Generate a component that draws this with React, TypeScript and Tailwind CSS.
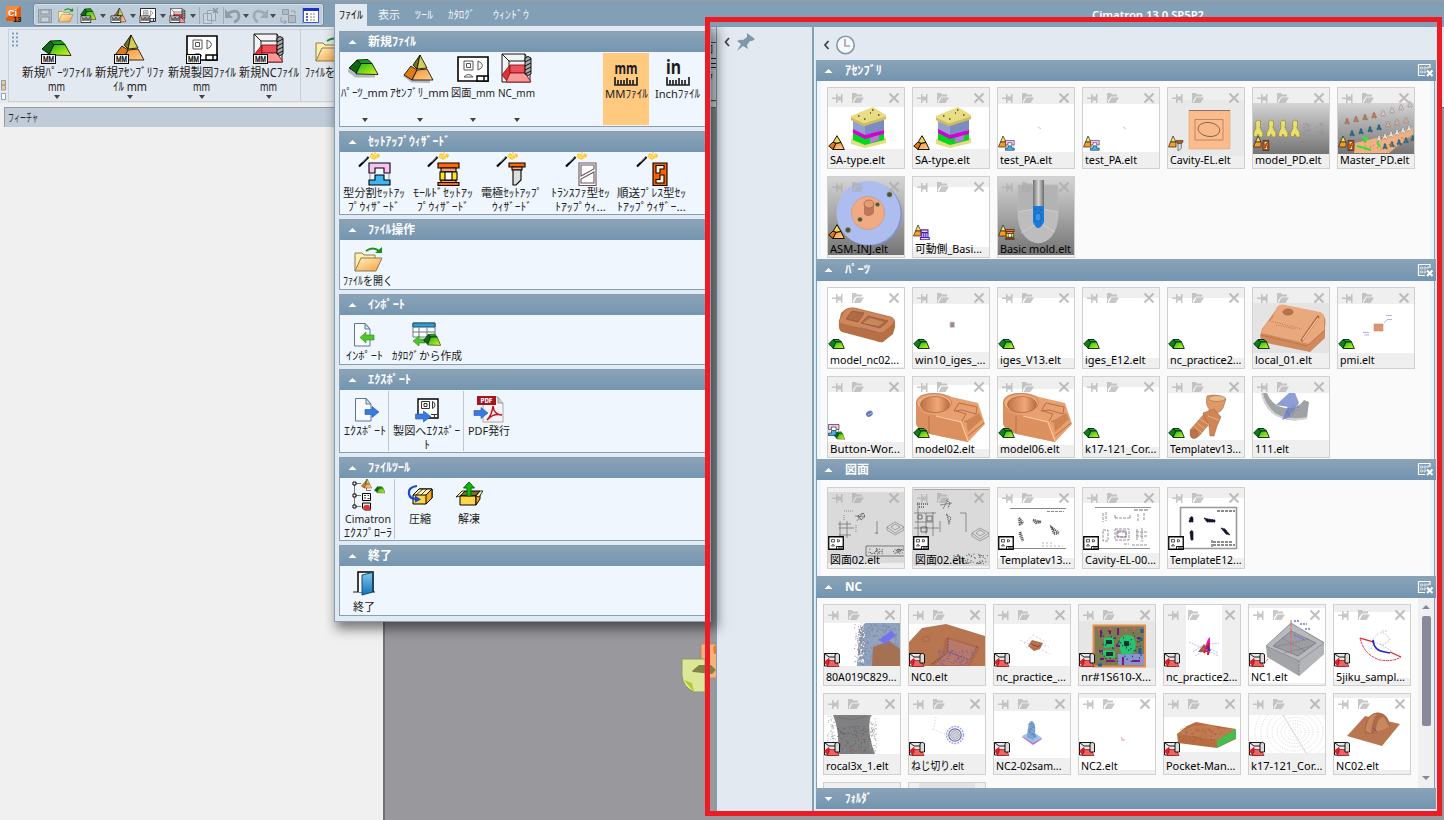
import React, { useLayoutEffect, useRef } from "react";

const FONT = "font-['Noto_Sans','Noto_Sans_CJK_JP',sans-serif]";

/* Text condensed or widened so that it spans exactly `w` pixels. */
function Fit({ t, w, className = "" }: { t: string; w: number; className?: string }) {
  const ref = useRef<HTMLSpanElement>(null);
  useLayoutEffect(() => {
    const el = ref.current;
    if (!el) return;
    el.style.transform = "none";
    const natural = el.getBoundingClientRect().width;
    el.style.transform = `scaleX(${w / natural})`;
  }, [t, w]);
  return (
    <span className="block" style={{ width: w }}>
      <span ref={ref} className={`inline-block origin-left whitespace-pre align-top ${className}`}>
        {t}
      </span>
    </span>
  );
}

function dots(n: number, x: number, y: number, w: number, h: number, seed: number) {
  let s = seed;
  const r = () => {
    s = (s * 1103515245 + 12345) % 2147483648;
    return s / 2147483648;
  };
  let d = "";
  for (let i = 0; i < n; i++) d += `M${(x + r() * w).toFixed(1)} ${(y + r() * h).toFixed(1)}h1`;
  return d;
}

/* ---------- glyph drawings ---------- */

const Green = ({ shadow = false }: { shadow?: boolean }) => (
  <g stroke="#000" strokeWidth=".8" strokeLinejoin="round">
    {shadow && <path d="M0 12L8 18L27 18" stroke="#b5b8bb" strokeWidth="3" fill="none" />}
    <path d="M1 10L9 2L13 5.500L8 15Z" fill="#0c6b0c" />
    <path d="M9 2L20 1.500L24 5.500L13 5.500Z" fill="#12a512" />
    <path d="M13 5.500L24 5.500L30 16.500L8 16Z" fill="url(#lime)" />
  </g>
);

const Pyramid = ({ shadow = false }: { shadow?: boolean }) => (
  <g stroke="#000" strokeWidth=".8" strokeLinejoin="round">
    {shadow && <path d="M1 20L9 26L27 26.500" stroke="#b5b8bb" strokeWidth="3" fill="none" />}
    <path d="M17 0L10 10L14 14Z" fill="#77771a" />
    <path d="M17 0L14 14L24 13Z" fill="#d4cd52" />
    <path d="M1 20L8 11L14 15L9 25Z" fill="#e07a14" />
    <path d="M14 15L24 14L30 25L9 25Z" fill="url(#orange)" />
  </g>
);

const Draft = () => (
  <g fill="#fff" stroke="#000">
    <path d="M1 1H31V25H1Z" strokeWidth="1.600" />
    <path d="M7 5H16V14H7ZM9.500 7.500H13.500V11.500H9.500ZM21 5V14Q25.500 12 25.500 9.500Q25.500 7 21 5M7 21Q11.500 16 16 21Z" strokeWidth="1" stroke="#555" />
    <path d="M20 20H31V25H20ZM27 20V25" strokeWidth="1.400" />
  </g>
);

const Milling = () => (
  <g stroke="#000" strokeWidth=".9" strokeLinejoin="round">
    <path d="M1 1H24L29 12V29H1Z" fill="#f1f3f5" />
    <path d="M1 1L8 8H24M8 8V14M24 1V8" fill="none" />
    <path d="M1 22L9 12V24L6 28Z" fill="#e2303b" stroke="#8f1018" />
    <path d="M9 12H24V20H9Z" fill="#ea5059" stroke="#8f1018" />
    <path d="M9 20H24L30 29H5Z" fill="#f79a98" stroke="#8f1018" />
    <path d="M24 5Q27 2 30 5V21Q27 24 24 21Z" fill="#a9a9a9" />
    <path d="M24 9L30 6M24 13L30 10M24 17L30 14M24 21L30 18" />
  </g>
);

const Folder = () => (
  <g strokeLinejoin="round">
    <path d="M1 24V6H8L10 8H21V13" fill="#fdf0a8" stroke="#8a7a50" />
    <path d="M1 24L7 11H28L22 24Z" fill="url(#folder)" stroke="#8a7a50" />
    <path d="M12 4Q19 -1 25 4" fill="none" stroke="#169016" strokeWidth="2" />
    <path d="M21 6H28V0Z" fill="#169016" />
  </g>
);

const MM = ({ x, y }: { x: number; y: number }) => (
  <g>
    <rect x={x} y={y} width="14" height="9" fill="#fff" stroke="#000" />
    <text x={x + 7} y={y + 7.600} fontSize="8.500" textAnchor="middle" fontFamily="Liberation Sans" stroke="#000" strokeWidth=".3" textLength="11" lengthAdjust="spacingAndGlyphs">
      MM
    </text>
  </g>
);

const Mold = ({ kind }: { kind: string }) => {
  switch (kind) {
    case "split":
      return (
        <g stroke="#000" strokeWidth="1.100">
          <path d="M1 1H22V11H16V6H7V11H1Z" fill="#fbc0f4" />
          <path d="M1 23V18H7V13H16V18H22V23Z" fill="#3fb5f2" />
          <path d="M2 12V17M21 12V17" stroke="#999" />
        </g>
      );
    case "mold":
      return (
        <g stroke="#000" strokeWidth="1.100">
          <path d="M1 1H22V6H1ZM1 20.500H22V23.500H1Z" fill="#ff6a00" />
          <path d="M4 6H19V10H4ZM4 18H19V20.500H4Z" fill="#f5a080" />
          <path d="M3 10H20V18H3Z" fill="#ffe51a" />
          <path d="M8 10H15V18H8Z" fill="#fff" />
        </g>
      );
    case "electrode":
      return (
        <g stroke="#000" strokeWidth="1.100">
          <path d="M3 1H19V5H3Z" fill="#ff6a00" />
          <path d="M6 5H16V8H6Z" fill="#f5b080" />
          <path d="M7 8H15V18L10 23H7Z" fill="#ddd" />
        </g>
      );
    case "transfer":
      return (
        <g stroke="#6a5560" strokeWidth="1.100" fill="#fff">
          <path d="M4 1H21V23.500H4Z" />
          <path d="M6 3H19V7L6 14ZM19 10V21H6V17Z" />
        </g>
      );
    default:
      return (
        <g stroke="#000" strokeWidth="1.100">
          <path d="M7 1H21V23.500H7Z" fill="#ff5e00" />
          <path d="M10 3.500H18V7H14V11H10ZM18 13V21H10V17.500H14V13Z" fill="#fff3c8" />
        </g>
      );
  }
};

function Icon({ n }: { n: string }) {
  if (n.startsWith("wiz-"))
    return (
      <svg width="40" height="34" viewBox="0 0 40 34">
        <path d="M5 14.500L14.500 5" stroke="#000" strokeWidth="2.200" />
        <path d="M8 10.500L13 5.500" stroke="#fff" strokeWidth=".8" />
        <path d="M17 2h3v2h3v-2h2v3h-3v2h-4v-2h-2zM20 1h2M24 4h3" fill="#ffe14a" stroke="#ffb400" strokeWidth=".8" strokeDasharray="2 1" />
        <g transform="translate(14 10)">
          <Mold kind={n.slice(4)} />
        </g>
      </svg>
    );
  switch (n) {
    case "part":
      return <svg width="31" height="20" viewBox="0 0 31 20" className="mb-[8px] mr-[3px]"><Green shadow /></svg>;
    case "asm":
      return <svg width="31" height="29" viewBox="0 0 31 29" className="mb-[2px] mr-[2px]"><Pyramid shadow /></svg>;
    case "draft":
      return <svg width="32" height="26" viewBox="0 0 32 26" className="mb-[4px]"><Draft /></svg>;
    case "nc":
      return <svg width="31" height="31" viewBox="0 0 31 31" className="mb-0.5"><Milling /></svg>;
    case "part-mm":
      return <svg width="32" height="25" viewBox="0 0 32 25"><Green /><MM x={.5} y={15.500} /></svg>;
    case "asm-mm":
      return <svg width="32" height="29" viewBox="0 0 32 29"><Pyramid /><MM x={.5} y={19.500} /></svg>;
    case "draft-mm":
      return <svg width="32" height="29" viewBox="0 0 32 29"><Draft /><MM x={.5} y={19.500} /></svg>;
    case "nc-mm":
      return <svg width="32" height="31" viewBox="0 0 32 31"><Milling /><MM x={.5} y={21.500} /></svg>;
    case "open":
      return <svg width="29" height="25" viewBox="0 0 29 25" className="mb-0.5"><Folder /></svg>;
    case "mmruler":
    case "inruler":
      return (
        <svg width="26" height="24" viewBox="0 0 26 24" className="mb-px overflow-visible">
          <text x={n === "mmruler" ? 13 : 1} y="12" textAnchor={n === "mmruler" ? "middle" : "start"} fontFamily="Noto Sans" fontWeight="bold" fontSize={n === "mmruler" ? 16 : 19} fill="#1c1c1c" textLength={n === "mmruler" ? 23 : 15} lengthAdjust="spacingAndGlyphs">
            {n === "mmruler" ? "mm" : "in"}
          </text>
          <path d="M2 15V23H24V15M5 18V23M8 18V23M11 18V23M14 16V23M17 18V23M20 18V23" fill="none" stroke="#222" strokeWidth="1.700" />
        </svg>
      );
    case "import":
    case "export":
      return (
        <svg width="28" height="26" viewBox="0 0 28 26" className="mb-px">
          <path d="M4.500 1.500H15L20 7V24H4.500Z" fill="#f8fbfe" stroke="#5b7794" />
          <path d="M15 1.500V7H20Z" fill="#dce6ef" stroke="#5b7794" />
          {n === "import" ? (
            <path d="M10 15.500L16 10V13H24V18H16V21Z" fill="#4fc52a" stroke="#2f8a1a" strokeWidth=".6" />
          ) : (
            <path d="M14 12.500H21V9.500L28 15L21 20.500V17.500H14Z" fill="#3a7be0" stroke="#2456ad" strokeWidth=".6" />
          )}
        </svg>
      );
    case "catalog":
      return (
        <svg width="29" height="26" viewBox="0 0 29 26" className="mb-px">
          <path d="M1 1H23V15H1Z" fill="#fff" stroke="#6b7b8b" />
          <path d="M1 1H23V5H1Z" fill="#1aa7e8" stroke="#345" />
          <path d="M1 10H23M7 1V15M15 1V15" stroke="#6b7b8b" />
          <path d="M1 19L7 14V17H13V21H7V24Z" fill="#4fc52a" stroke="#2f8a1a" strokeWidth=".6" />
          <g transform="translate(11 11) scale(.59 .75)"><Green /></g>
        </svg>
      );
    case "draftexport":
      return (
        <svg width="26" height="26" viewBox="0 0 26 26" className="mb-px">
          <path d="M4 2H24V21H4Z" fill="#fff" stroke="#000" strokeWidth="1.400" />
          <path d="M7.500 4.500H15.500V11.500H7.500ZM10 6.500H13V9.500H10ZM18.500 4.500V11.500Q21 10.500 21 8Q21 5.500 18.500 4.500M17 17.500H24M20.500 17.500V21" fill="none" stroke="#333" />
          <path d="M1.500 17H9.500V14L17 19.500L9.500 25V22H1.500Z" fill="#3a7be0" stroke="#2456ad" strokeWidth=".6" />
        </svg>
      );
    case "pdf":
      return (
        <svg width="31" height="28" viewBox="0 0 31 28" className="mb-px">
          <path d="M10 2H25L30 8V27H10Z" fill="#f4f4f4" stroke="#aaa" />
          <path d="M25 2V8H30" fill="#ccc" stroke="#999" />
          <rect x="4" y="1" width="19" height="9" fill="#a31621" />
          <text x="13.500" y="8.200" fill="#fff" fontSize="7" fontWeight="bold" textAnchor="middle" fontFamily="DejaVu Sans" textLength="12" lengthAdjust="spacingAndGlyphs">PDF</text>
          <path d="M14 25Q19 20 20 11Q21 20 29 20Q20 18 14 25Z" fill="none" stroke="#c01722" strokeWidth="1.600" />
          <path d="M1 15.500H8V12.500L15 18L8 23.500V20.500H1Z" fill="#3a7be0" stroke="#2456ad" strokeWidth=".6" />
        </svg>
      );
    case "tree":
      return (
        <svg width="34" height="34" viewBox="0 0 34 34">
          <path d="M3.500 5.500V28.500M3.500 5.500H10M3.500 17.500H10M3.500 28.500H10M15.500 10V12.500H20" fill="none" stroke="#777" />
          <path d="M2 4h3v3h-3zM2 16h3v3h-3zM2 27h3v3h-3z" fill="#fff" stroke="#000" />
          <g transform="translate(10 1) scale(.36)" strokeWidth="2"><Pyramid /></g>
          <g transform="translate(23 8) scale(.38 .42)"><Green /></g>
          <path d="M11.500 15.500h8v7h-8z" fill="#fff" stroke="#000" />
          <path d="M13 17.500h2M16.500 17.500h1.500M13 20h2M16.500 20.500h2" stroke="#333" />
          <path d="M11.500 25h8v7h-6l-2-2z" fill="#e8e8e8" stroke="#000" />
          <path d="M12 29l2-2h4l2 5h-6z" fill="#e5303a" />
        </svg>
      );
    case "zip":
      return (
        <svg width="26" height="26" viewBox="0 0 26 26" className="mb-1">
          <path d="M6 13L12 7H25V16L19 22H6Z" fill="#ffd44a" stroke="#000" />
          <path d="M6 13L12 7H25L19 13Z" fill="#fff0b0" stroke="#000" />
          <path d="M19 13V22L25 16V7Z" fill="#f5ac12" stroke="#000" />
          <path d="M9 13L16 7M14 13L20 7" stroke="#000" strokeWidth=".7" />
          <path d="M10 4Q1 5 2 12Q3 17 9 17" fill="none" stroke="#1946d2" strokeWidth="2.200" />
          <path d="M8 13.500L14 17.500L8 20.500Z" fill="#1946d2" />
        </svg>
      );
    case "unzip":
      return (
        <svg width="28" height="26" viewBox="0 0 28 26" className="mb-1">
          <path d="M5 14L10 9H25L21 14Z" fill="#77701a" stroke="#000" />
          <path d="M5 14H21V23H5Z" fill="#ffd44a" stroke="#000" />
          <path d="M21 14L25 9V17L21 23Z" fill="#f5ac12" stroke="#000" />
          <path d="M5 14L1 15L7 9H10ZM21 14L24 15L28 9H25Z" fill="#fff0b0" stroke="#000" strokeWidth=".8" />
          <path d="M12 14V6H8.500L14 0L19.500 6H16V14Z" fill="#12b512" stroke="#046804" />
        </svg>
      );
    case "door":
      return (
        <svg width="24" height="26" viewBox="0 0 24 26" className="mb-1">
          <path d="M1 22H23" stroke="#222" />
          <path d="M6 22V2H21V22" fill="#fff" stroke="#000" strokeWidth="1.500" />
          <path d="M10 5L20.500 2.500V22L10 25Z" fill="url(#door)" stroke="#0e4c78" />
        </svg>
      );
    default:
      return null;
  }
}

const Down = ({ className = "" }: { className?: string }) => (
  <svg width="6" height="4" viewBox="0 0 6 4" className={className}>
    <path d="M0 0H6L3 4Z" fill="#444" />
  </svg>
);

/* ---------- ribbon ---------- */

function RibbonItem({ icon, lines, className }: { icon: string; lines: [string, number][]; className: string }) {
  return (
    <div className={`flex shrink-0 flex-col items-center ${className}`}>
      <div className="flex h-[34px] items-end">
        <Icon n={icon} />
      </div>
      <div className="mt-[2px] flex h-7 flex-col items-center text-[12px] leading-[14px]">
        {lines.map(([t, w]) => (
          <Fit key={t} t={t} w={w} />
        ))}
      </div>
      <Down className="mt-[1px]" />
    </div>
  );
}

const Quick = () => (
  <div className="flex h-[23px] w-[291px] items-center rounded-[3px] border border-[#71899d] bg-[#bfcddb] shadow-[inset_0_0_0_1px_#d5dfe8]">
    <svg width="289" height="21" viewBox="34 4 289 21">
      <path d="M38.500 9.500H51.500V22.500H38.500Z" fill="#aab4be" stroke="#8f9aa5" />
      <path d="M41 10H49V14H41ZM41 17H49V22H41Z" fill="#c8d2dc" stroke="#8f9aa5" />
      <g transform="translate(58 8) scale(.54 .58)"><Folder /></g>
      <path d="M77.500 7V24M199.500 7V24M223.500 7V24M302.500 7V24" stroke="#9aabbb" />
      <g transform="translate(80 7.500) scale(.53 .72)"><Green /></g>
      <g transform="translate(111 8) scale(.5 .55)"><Pyramid /></g>
      <g transform="translate(140 8) scale(.5 .53)"><Draft /></g>
      <g transform="translate(170 8) scale(.5)"><Milling /></g>
      {[81, 111, 140, 170].map((x) => (
        <g key={x} transform={`translate(${x} 16) scale(.7 .72)`}><MM x={0} y={0} /></g>
      ))}
      {[103, 133, 163, 193, 246, 273].map((x) => (
        <path key={x} d={`M${x - 3} 14h6l-3 4z`} fill="#444c55" />
      ))}
      <path d="M203.500 13.500h8v10h-8zM207.500 10.500h8v10h-8z" fill="#c9d3dc" stroke="#98a5b1" />
      <path d="M213 8l5 5M218 8l-5 5" stroke="#8996a3" strokeWidth="1.500" />
      <path d="M227 14Q239 7 239 17Q238 21 234 22" fill="none" stroke="#8f9ba7" strokeWidth="2.800" />
      <path d="M225 9V18H233Z" fill="#8f9ba7" />
      <path d="M266 14Q254 7 254 17Q255 21 258 22" fill="none" stroke="#9eaab5" strokeWidth="2.800" />
      <path d="M268 9V18H260Z" fill="#9eaab5" />
      <path d="M282.500 9.500h6v5h-6zM288.500 15.500h7v7h-7z" fill="#aeb9c4" stroke="#8f9ba7" />
      <path d="M291 11h4v3M281 17v5h5M284 20l2.500 2l-2.500 2" fill="none" stroke="#8f9ba7" />
      <path d="M303.500 8.500H318.500V22.500H303.500Z" fill="#fff" stroke="#3f59c8" />
      <path d="M303 8H319V11H303Z" fill="#1b2fd0" />
      <path d="M306 14h2M306 17h2M306 20h2" stroke="#1b35c0" strokeWidth="1.500" />
      <path d="M310 14h6M310 17h6M310 20h6" stroke="#888" strokeDasharray="2 1" />
    </svg>
  </div>
);

function AppFrame() {
  return (
    <div className="flex h-[820px] w-[1444px] flex-col">
      <header className="flex h-[27px] items-start border-t border-[#999da0] bg-[#829fb5] pl-[6px]">
        <svg width="16" height="16" viewBox="0 0 16 16" className="mt-[5px] shrink-0">
          <rect width="15" height="15" fill="#e05a14" />
          <path d="M0 0H15L0 12Z" fill="#f28b42" />
          <text x="2" y="9.500" fontFamily="Liberation Sans" fontWeight="bold" fontSize="9" fill="#fff">Ci</text>
          <text x="7" y="15.500" fontFamily="Liberation Sans" fontSize="8" fontWeight="bold" fill="#111" textLength="8.500">13</text>
        </svg>
        <div className="ml-[11px] mt-[2px]">
          <Quick />
        </div>
        <div className="ml-[768px] mt-[5px] text-[11.5px] font-semibold leading-[18px] text-white">
          <Fit t="Cimatron 13.0 SP5P2" w={112} />
        </div>
      </header>
      <div className="flex h-[76px] bg-[#e3e9f0]">
        <div className="flex w-2 shrink-0 flex-col items-center justify-end pb-[3px]">
          <svg width="6" height="20" viewBox="0 0 6 20">
            <path d="M.5.500h4v4.500h-4zM.5 5h4v5h-4z" fill="#ffc477" stroke="#88a3b8" />
            <path d="M.5 13.500h4v6h-4z" fill="#fff" stroke="#88a3b8" />
          </svg>
        </div>
        <div className="mt-[2px] flex h-[73px] w-[1434px] border border-[#ccd1d6]">
          <svg width="11" height="18" viewBox="0 0 11 18" className="mt-[2px] shrink-0">
            <path d="M3 1.500h2M7 1.500h2M3 5.500h2M7 5.500h2M3 9.500h2M7 9.500h2M3 13.500h2M7 13.500h2" stroke="#85a0b6" strokeWidth="2" />
          </svg>
          <RibbonItem className="w-[73px]" icon="part-mm" lines={[["新規ﾊﾟｰﾂﾌｧｲﾙ", 70], ["mm", 17]]} />
          <RibbonItem className="w-[73px]" icon="asm-mm" lines={[["新規ｱｾﾝﾌﾞﾘﾌｧ", 69], ["ｲﾙ mm", 34]]} />
          <RibbonItem className="w-[71px]" icon="draft-mm" lines={[["新規製図ﾌｧｲﾙ", 68], ["mm", 17]]} />
          <RibbonItem className="w-[63px]" icon="nc-mm" lines={[["新規NCﾌｧｲﾙ", 60], ["mm", 17]]} />
          <div className="w-px shrink-0 bg-[#c9ced3]" />
          <div className="ml-1 flex flex-col items-start">
            <div className="flex h-[34px] items-end pl-[10px]"><Icon n="open" /></div>
            <div className="mt-[2px] text-[12px] leading-[14px]"><Fit t="ﾌｧｲﾙを開く" w={50} /></div>
          </div>
          <div className="ml-[352px] mt-3 w-[12px] border-y border-[#555] text-[12px] leading-[14px]">ﾛ<br />三<br />ｸ</div>
        </div>
      </div>
      <div className="flex flex-1 bg-[#f0f0f0]">
        <div className="flex w-[383px] flex-col pl-1 pt-1">
          <div className="h-5 border-l border-t border-[#989a9c] bg-[#bfcbd9] pl-[3px] text-[11px] leading-[19px] text-[#222]">
            <Fit t="フィーチャ" w={30} />
          </div>
        </div>
        <div className="mt-1 flex-1 border-l-2 border-t border-[#6f7175] bg-[#98989d]" />
      </div>
    </div>
  );
}

/* ---------- file menu ---------- */

type Item = { icon: string; lines: [string, number][]; className: string; arrow?: boolean; sep?: boolean };

const sections: { title: string; w: number; h: string; items: Item[] }[] = [
  {
    title: "新規ﾌｧｲﾙ", w: 48, h: "h-[96px]",
    items: [
      { icon: "part", lines: [["ﾊﾟｰﾂ_mm", 47]], className: "w-[49px]", arrow: true },
      { icon: "asm", lines: [["ｱｾﾝﾌﾞﾘ_mm", 59]], className: "w-[61px]", arrow: true },
      { icon: "draft", lines: [["図面_mm", 44]], className: "w-[46px]", arrow: true },
      { icon: "nc", lines: [["NC_mm", 37]], className: "w-[41px]", arrow: true },
      { icon: "mmruler", lines: [["MMﾌｧｲﾙ", 43]], className: "ml-[66px] my-px w-[46px] bg-[#ffc980]" },
      { icon: "inruler", lines: [["Inchﾌｧｲﾙ", 45]], className: "ml-[5px] mt-px w-[47px]" },
    ],
  },
  {
    title: "ｾｯﾄｱｯﾌﾟｳｨｻﾞｰﾄﾞ", w: 82, h: "h-[84px]",
    items: [
      { icon: "wiz-split", lines: [["型分割ｾｯﾄｱｯ", 62], ["ﾌﾟｳｨｻﾞｰﾄﾞ", 52]], className: "w-[68px]" },
      { icon: "wiz-mold", lines: [["ﾓｰﾙﾄﾞｾｯﾄｱｯ", 60], ["ﾌﾟｳｨｻﾞｰﾄﾞ", 52]], className: "w-[69px]" },
      { icon: "wiz-electrode", lines: [["電極ｾｯﾄｱｯﾌﾟ", 61], ["ｳｨｻﾞｰﾄﾞ", 40]], className: "w-[69px]" },
      { icon: "wiz-transfer", lines: [["ﾄﾗﾝｽﾌｧ型ｾｯ", 59], ["ﾄｱｯﾌﾟｳｨ...", 51]], className: "w-[69px]" },
      { icon: "wiz-progressive", lines: [["順送ﾌﾟﾚｽ型ｾｯ", 69], ["ﾄｱｯﾌﾟｳｨｻﾞｰ...", 69]], className: "w-[73px]" },
    ],
  },
  { title: "ﾌｧｲﾙ操作", w: 47, h: "h-[71px]", items: [{ icon: "open", lines: [["ﾌｧｲﾙを開く", 50]], className: "w-[56px]" }] },
  {
    title: "ｲﾝﾎﾟｰﾄ", w: 37, h: "h-[71px]",
    items: [
      { icon: "import", lines: [["ｲﾝﾎﾟｰﾄ", 37]], className: "w-[48px]" },
      { icon: "catalog", lines: [["ｶﾀﾛｸﾞから作成", 70]], className: "w-[77px]" },
    ],
  },
  {
    title: "ｴｸｽﾎﾟｰﾄ", w: 43, h: "h-[84px]",
    items: [
      { icon: "export", lines: [["ｴｸｽﾎﾟｰﾄ", 42]], className: "w-[49px]", sep: true },
      { icon: "draftexport", lines: [["製図へｴｸｽﾎﾟｰ", 67], ["ﾄ", 6]], className: "w-[75px]", sep: true },
      { icon: "pdf", lines: [["PDF発行", 42]], className: "w-[49px]" },
    ],
  },
  {
    title: "ﾌｧｲﾙﾂｰﾙ", w: 42, h: "h-[84px]",
    items: [
      { icon: "tree", lines: [["Cimatron", 46], ["ｴｸｽﾌﾟﾛｰﾗ", 48]], className: "w-[55px]", sep: true },
      { icon: "zip", lines: [["圧縮", 22]], className: "w-[49px]" },
      { icon: "unzip", lines: [["解凍", 22]], className: "w-[49px]" },
    ],
  },
  { title: "終了", w: 24, h: "h-[71px]", items: [{ icon: "door", lines: [["終了", 22]], className: "w-[48px]" }] },
];

const Up = ({ flip = false }: { flip?: boolean }) => (
  <svg width="9" height="4" viewBox="0 0 9 4" className="shrink-0">
    <path d={flip ? "M.5 0H8.500L4.500 4Z" : "M.5 4H8.500L4.500 0Z"} fill="#fff" />
  </svg>
);

function FileMenu() {
  return (
    <div className="absolute left-[334px] top-[4px]">
      <nav className="flex h-[22px] text-[11px] leading-[21px] text-[#eff5fa]">
        <div className="ml-px w-8 bg-[#e3e9f0] pl-[4px] text-[#111]"><Fit t="ﾌｧｲﾙ" w={24} /></div>
        <div className="ml-[11px] w-[37px]"><Fit t="表示" w={22} /></div>
        <div className="w-[33px]"><Fit t="ﾂｰﾙ" w={18} /></div>
        <div className="w-[45px]"><Fit t="ｶﾀﾛｸﾞ" w={27} /></div>
        <div><Fit t="ｳｨﾝﾄﾞｳ" w={36} /></div>
      </nav>
      <div className="flex h-[596px] w-[377px] flex-col gap-[4px] border border-t-0 border-[#84a0b6] bg-[#e3e9f0] pl-1 pt-[5px] shadow-[4px_5px_11px_2px_rgba(0,0,0,0.5)] [clip-path:inset(0_-30px_-30px_-10px)]">
        {sections.map((s) => (
          <section key={s.title} className={`flex shrink-0 flex-col border border-r-0 border-[#84a0b6] bg-[#eff6fd] ${s.h}`}>
            <h2 className="flex h-5 shrink-0 items-center bg-gradient-to-b from-[#8ba3b7] to-[#7495b0] pl-2 text-[12px] font-bold leading-[18px] text-white">
              <Up />
              <span className="ml-[11px]"><Fit t={s.title} w={s.w} /></span>
            </h2>
            <div className="flex min-h-0 flex-1">
              {s.items.map((it) => (
                <div key={it.icon} className={`flex shrink-0 flex-col items-center ${it.className}`}>
                  <div className="flex h-[34px] shrink-0 items-end"><Icon n={it.icon} /></div>
                  <div className="flex flex-col items-center text-[11.5px] leading-[13.5px] text-[#222]">
                    {it.lines.map(([t, w]) => <Fit key={t} t={t} w={w} />)}
                  </div>
                  {it.arrow && <Down className="mt-[18px]" />}
                </div>
              )).flatMap((el, i) => s.items[i].sep ? [el, <div key={`s${i}`} className="-ml-px my-px w-px shrink-0 bg-[#c0c6cb]" />] : [el])}
            </div>
          </section>
        ))}
      </div>
    </div>
  );
}

/* ---------- recent files ---------- */

function Badge({ k }: { k: string }) {
  const small = "translate(7 5) scale(.42 .45)";
  return (
    <svg width="17" height="16" viewBox="0 0 17 16">
      {k === "part" && (
        <g stroke="#022" strokeWidth=".9" strokeLinejoin="round">
          <path d="M.7 9L5 4.500L8 7L5 13Z" fill="#0b850b" />
          <path d="M5 4.500H11L13.500 7H8Z" fill="#15b515" />
          <path d="M8 7H13.500L16.300 13.500H5Z" fill="url(#lime)" />
        </g>
      )}
      {k === "asm" && (
        <g stroke="#000" strokeWidth=".9" strokeLinejoin="round">
          <path d="M9 .7L5.500 6.500L8 8.500L13 7.500Z" fill="#e6dc52" />
          <path d="M.7 11L5 7L8 8.500L5 14.500Z" fill="#e8720c" />
          <path d="M8 8.500L13 7.500L16.300 14.500H5Z" fill="url(#orange)" />
        </g>
      )}
      {k === "draft" && (
        <g stroke="#000" fill="#fff">
          <path d="M.75 1.750H15.250V14.250H.75Z" strokeWidth="1.300" />
          <path d="M3.500 4.500h3v2.500h-3zM9.500 4.500v2.500q3 0 2-2zM3.500 11h3l-1-1.500h-1z" strokeWidth=".8" stroke="#333" />
          <path d="M8.500 11.500H15V14H8.500ZM11 11.500V14M13 11.500V14" strokeWidth=".9" />
        </g>
      )}
      {k === "nc" && (
        <g stroke="#000" strokeWidth=".9">
          <path d="M.5 1.500H12V14H.5Z" fill="#e8e8e8" />
          <path d="M.5 1.500L5 5H11" fill="none" />
          <path d="M.5 10L5 6.500V14H4Z" fill="#e8202d" stroke="#c01720" />
          <path d="M5 8.500H12L15 14.500H3L5 11Z" fill="#f0625f" stroke="#8f1018" strokeWidth=".7" />
          <path d="M11 2.500Q13 0 15.500 2.500V11H11Z" fill="#dcdcdc" />
        </g>
      )}
      {k === "split-part" && (
        <>
          <g transform="scale(.5)"><Mold kind="split" /></g>
          <g transform="translate(6 7) scale(.36 .5)"><Green /></g>
        </>
      )}
      {k.startsWith("a-") && (
        <>
          <path d="M5 1L2.500 7H8Z" fill="#f2e56a" stroke="#222" strokeWidth=".7" />
          <path d="M2.500 7H8V12H.5Z" fill="#ff9a1e" stroke="#222" strokeWidth=".7" />
          <g transform={small}>
            {k === "a-purple" ? (
              <path d="M3 2H19V8H3ZM1 19H22V24H1ZM4 8H19V19H4ZM9 8V19M14 8V19" fill="#e9dcff" stroke="#4b1fae" strokeWidth="2.500" />
            ) : (
              <g strokeWidth="2"><Mold kind={k.slice(2)} /></g>
            )}
          </g>
        </>
      )}
    </svg>
  );
}

type File = { n: string; w: number; b: string; a?: number; z?: number; bg?: string; art?: React.ReactNode };

const moldBase = (
  <g>
    <path d="M24 52L42 45L59 51V56L38 61L24 57Z" fill="#e6db82" />
    <path d="M26 31L43 26L57 31V43L38 50L26 43Z" fill="#7d8cc0" />
    <path d="M26 31L38 36V50L26 44Z" fill="#93a0d0" />
    <path d="M26 42L38 48L57 43V48L38 53L26 47Z" fill="#d400d4" />
    <path d="M26 46L38 52L57 47V53L38 58L26 53Z" fill="#00d820" />
    <path d="M43 51L52 48V53L43 56Z" fill="#b678da" />
    <path d="M24 29L46 20L59 28V32L37 39L24 33Z" fill="#e8dc84" />
    <path d="M24 33L37 39L59 32V29.500L37 36.500L24 30.500Z" fill="#cbbd5c" />
    <path d="M31 29h1.500M45 23h1.500M51 28h1.500M37 32h1.500M43 26h1" stroke="#4f4a2a" strokeWidth="1.500" />
  </g>
);

const people = (y: number, c: string, n: number, x0: number, dx: number, dy: number) =>
  Array.from({ length: n }, (_, i) => (
    <path key={i} transform={`translate(${x0 + i * dx} ${y + i * dy}) scale(.55)`} d="M0 -5L2 -3L2 0L5 4L3 6L0 4L-3 6L-4 3L-2 0L-2 -3Z" fill={c} stroke="#555" strokeWidth=".6" />
  ));

const cup = (dx: number) => (
  <g transform={`translate(${dx} 0)`}>
    <path d="M4 27Q4 17 22 17Q32 17 40 21L66 27L73 48L56 66L18 58Q4 54 4 46Z" fill="#e8a070" />
    <path d="M4 27Q6 38 23 39L50 46L56 66L18 58Q4 54 4 46Z" fill="#dc9060" />
    <ellipse cx="22" cy="27" rx="17.500" ry="9.500" fill="#efab7e" stroke="#b5754c" strokeWidth=".7" />
    <ellipse cx="23" cy="28.500" rx="14.500" ry="8" fill="url(#bore)" stroke="#a56138" strokeWidth=".6" />
    <path d="M42 35L47 27L65 31L64 38L50 34ZM52 46L64 41L70 43M56 60L72 47M44 35L54 38L50 45" fill="none" stroke="#a5643c" strokeWidth=".8" />
    <path d="M54 45L67 37L70 43L56 56Z" fill="#cf8453" />
    <path d="M17 40V57" stroke="#8b5433" strokeWidth=".5" />
    <path d="M24 40L49 46L56 65" fill="none" stroke="#ffc99c" strokeWidth="1.200" />
  </g>
);

const plan = (c: string) => (
  <g fill="none" stroke={c} strokeWidth=".7">
    <path d="M13 21.500H69M15 61.500H69" />
    <path d="M50 24.500H67" strokeDasharray="3 1" />
    <path d="M22 31l4 5l-3 1zM36 33l8 2l-5 1zM23 45l3 9l-3-6zM55 41l7 5l-5 1z" strokeWidth="2.500" strokeDasharray="1 .8" />
    <path d="M45 56h12M45 59h21" strokeDasharray="2 2" stroke="#999" />
  </g>
);

const asmFiles: File[] = [
  { n: "SA-type.elt", w: 55, b: "asm", a: 20, z: 62, art: moldBase },
  { n: "SA-type.elt", w: 55, b: "asm", a: 20, z: 62, art: moldBase },
  { n: "test_PA.elt", w: 52, b: "a-split", a: 17, z: 65, art: <path d="M41 40l3 2" stroke="#e9b8b8" /> },
  { n: "test_PA.elt", w: 52, b: "a-split", a: 17, z: 65, art: <path d="M41 40l3 2" stroke="#e9b8b8" /> },
  {
    n: "Cavity-EL.elt", w: 60.500, b: "a-electrode", a: 13, z: 69, bg: "#e9e9e9",
    art: (
      <g>
        <path d="M22 23.500H63V62H22Z" fill="#fbbb8a" stroke="#d9a883" strokeWidth=".6" />
        <path d="M22 23.500H63" stroke="#8a7568" />
        <path d="M28 32.500H56V53H28Z" fill="none" stroke="#b18463" strokeWidth=".9" />
        <ellipse cx="42" cy="42.500" rx="11" ry="7" fill="#f8b888" stroke="#6b564a" strokeWidth=".8" transform="rotate(8 42 42)" />
      </g>
    ),
  },
  {
    n: "model_PD.elt", w: 66.500, b: "a-progressive", a: 16, z: 67, bg: "url(#steel)",
    art: (
      <g>
        {[6, 19, 31, 43].map((x) => (
          <path key={x} transform={`translate(${x} 42)`} d="M0 -9L2.500 -8L2.500 -4L2 -1L5 4L4.500 8L1.500 8L0 5L-1.500 8L-4.500 7L-4 3L-2 -1L-2.500 -7Z" fill="#e9df6e" stroke="#8a8238" strokeWidth=".8" strokeDasharray="2 .6" />
        ))}
        <path d={dots(34, 51, 36, 7, 14, 4) + dots(28, 64, 36, 8, 14, 14)} stroke="#9b8ba5" strokeWidth=".8" />
      </g>
    ),
  },
  {
    n: "Master_PD.elt", w: 69.500, b: "a-progressive", a: 16, z: 67, bg: "url(#steel)",
    art: (
      <g>
        {people(34, "#c07a52", 4, 10, 9, -2)}
        {people(26, "#d8c8cc", 4, 46, 9, -3)}
        {people(46, "#1f6990", 4, 15, 9, -2)}
        {people(37, "#dcaf9b", 3, 51, 9, -2)}
        <path d="M18 56L60 46L76 40V47L52 66H17Z" fill="#efb184" />
        {people(51, "#e5e5e0", 6, 42, 6, -2)}
        {people(59, "#2b6e8c", 5, 48, 7, -2)}
        <path d={dots(40, 25, 50, 48, 14, 6)} stroke="#b06f4c" strokeWidth="1" />
        <path d="M25 50L30 52L27 55M20 59L34 63M40 55L43 60" stroke="#32e632" strokeWidth="2.200" fill="none" />
      </g>
    ),
  },
  {
    n: "ASM-INJ.elt", w: 58, b: "asm", a: 1, z: 79, bg: "url(#steel)",
    art: (
      <g>
        <circle cx="43" cy="38" r="32" fill="#7f93c6" />
        <circle cx="41.500" cy="37" r="32" fill="#aebdf0" />
        <circle cx="41" cy="37" r="16.500" fill="#f0aa84" stroke="#c8926e" strokeWidth=".6" />
        <path d="M37 28Q42 22 47 28V37Q42 43 37 38Z" fill="#bd7657" />
        <ellipse cx="42" cy="28" rx="5" ry="4" fill="#e59b75" stroke="#9b6148" strokeWidth=".7" />
        <g fill="#4b5335" stroke="#8c8f60" strokeWidth=".6">
          <circle cx="62.500" cy="18.500" r="2.600" /><circle cx="50.500" cy="28.500" r="2" /><circle cx="33" cy="43.500" r="2.200" /><circle cx="21" cy="54" r="2.600" />
        </g>
      </g>
    ),
  },
  { n: "可動側_Basi...", w: 67, b: "a-purple", a: 11, z: 71 },
  {
    n: "Basic mold.elt", w: 71, b: "a-mold", a: 1, z: 79, bg: "url(#steel)",
    art: (
      <g>
        <path d="M21 9H61V42Q58 66 41 67Q24 65 21 42Z" fill="#b3b3b3" stroke="#bcbcbc" strokeWidth=".7" />
        <path d="M21 36L37 33L46 33L61 36V42Q58 66 41 67Q24 65 21 42Z" fill="#bdbdbd" />
        <path d="M21 36L37 33M61 36L46 33M24 57L38 49M58 56L46 49" stroke="#d6d6d6" strokeWidth=".7" />
        <path d="M36 4H47V34H36Z" fill="url(#shaft)" />
        <path d="M36 30H47V46Q41 58 36 46Z" fill="#1d79d8" />
        <path d="M37 33l3 1M43 33l2 2M38 38Q41 36 44 38V44Q41 47 38 44Z" stroke="#0a5aa8" strokeWidth=".8" fill="#3a8fe6" />
      </g>
    ),
  },
];

const partFiles: File[] = [
  {
    n: "model_nc02...", w: 69, b: "part", a: 1, z: 80,
    art: (
      <g>
        <path d="M12 36L14 26Q20 20 27 21L64 30Q69 32 68 40L66 47L56 55Q53 56 49 54L15 45Q11 43 12 36Z" fill="#b76f45" />
        <path d="M12 34L17 24Q21 20 28 21L64 30Q69 32 66 37L57 45Q53 47 49 45L15 37Q12 36 12 34Z" fill="#cf865b" stroke="#a0603a" strokeWidth=".5" />
        <path d="M19 32L25 24L37 26L31 35ZM34 36L41 29L61 34L53 41Z" fill="#b06a44" stroke="#86502f" strokeWidth=".6" />
        <path d="M36 36L43 31L57 35L51 39Z" fill="#c98760" />
        <path d="M34 41l16 4" stroke="#8a6a80" strokeDasharray="2 1" fill="none" />
      </g>
    ),
  },
  { n: "win10_iges_...", w: 70.500, b: "part", a: 17, z: 65, art: <path d="M38 35h4.500v5.500h-4.500z" fill="#928d8d" stroke="#dccaca" /> },
  { n: "iges_V13.elt", w: 61, b: "part", a: 11, z: 71 },
  { n: "iges_E12.elt", w: 60.500, b: "part", a: 11, z: 71 },
  { n: "nc_practice2...", w: 71.500, b: "part", a: 11, z: 71 },
  {
    n: "local_01.elt", w: 57, b: "part", a: 16, z: 66, bg: "#e4e4e4",
    art: (
      <g>
        <path d="M8 49L10 42L26 20L69 27Q75 29 73 40V51L58 65L10 55Z" fill="#d08a5e" />
        <path d="M9 46Q14 34 20 32L25 20Q27 17 31 17.500L68 25Q73 27 72 31L72 43L57 57Z" fill="#eaa87d" />
        <path d="M9 48L55 59L73 43" stroke="#b87348" strokeWidth=".8" fill="none" />
        <ellipse cx="36" cy="25" rx="5" ry="3" fill="#b6734c" stroke="#8f5534" strokeWidth=".6" />
        <path d="M18 34L50 42M24 38L44 42" stroke="#a9795e" strokeDasharray="1 1.500" strokeWidth="1" />
        <path d="M50 53L66 30" stroke="#b06d45" strokeWidth="3" strokeLinecap="round" />
        <path d="M50.500 53L66 31" stroke="#ffc8a3" strokeWidth="1.300" />
      </g>
    ),
  },
  {
    n: "pmi.elt", w: 34.500, b: "part", a: 17, z: 66,
    art: (
      <g>
        <path d="M37 37h9v7h-9z" fill="#e1956d" stroke="#b17c62" strokeWidth=".5" />
        <path d="M49 28.500h6M51 32.500h4M26 45.500h6M27 48h5M47 36l4-4" stroke="#b3b3ec" strokeWidth="1" />
      </g>
    ),
  },
  {
    n: "Button-Wor...", w: 70, b: "split-part", a: 16, z: 66,
    art: <g><ellipse cx="42.500" cy="38" rx="3.500" ry="2.800" fill="#6979b8" transform="rotate(-35 42 38)" /><path d="M41 39l4-2" stroke="#aeb9dd" /></g>,
  },
  { n: "model02.elt", w: 59.500, b: "part", a: 9, z: 73, art: cup(0) },
  { n: "model06.elt", w: 59.500, b: "part", a: 13, z: 69, art: cup(2) },
  { n: "k17-121_Cor...", w: 71.500, b: "part", a: 11, z: 71 },
  {
    n: "Templatev13...", w: 71, b: "part", a: 17, z: 64,
    art: (
      <g fill="#cf8654" stroke="#9c5c34" strokeWidth=".5">
        <path d="M40 20Q49 17 59 23L56 32Q55 35 50 37L48 47H42L42 33Q38 28 40 20Z" fill="#dd9a68" />
        <path d="M23 54L38 37L47 42L33 59Q28 64 24 60Z" />
        <path d="M36 37L47 33L54 41L50 50L47 60H43L42 50Z" />
        <path d="M27 50L35 57M30 47L38 53M33 43L42 49M41 40L52 44" stroke="#f0b98e" strokeWidth=".8" />
        <ellipse cx="27" cy="58" rx="4" ry="4.500" fill="#b9754a" />
        <ellipse cx="50" cy="22.500" rx="8.500" ry="3" fill="#e5b98a" />
      </g>
    ),
  },
  {
    n: "111.elt", w: 34, b: "part", a: 17, z: 64,
    art: (
      <g>
        <path d="M10 17H15Q20 30 33 32Q45 34 52 24L57 26L55 42Q39 48 23 39Q11 31 10 17Z" fill="#a0a2a5" />
        <path d="M10 17Q12 29 23 38Q37 46 55 42" stroke="#d2d4d6" strokeWidth="2" fill="none" />
        <path d="M24 29L37 17H43L47 27L36 42L30 44L36 31Z" fill="#7186c9" fillOpacity=".8" />
        <path d={dots(20, 33, 29, 14, 12, 9)} stroke="#566baf" strokeWidth=".7" />
      </g>
    ),
  },
];

const iso = (x: number, y: number) => (
  <path d={`M${x} ${y}l8-5l9 5l-9 6zM${x} ${y}v3l8 5l9-5v-3M${x + 4} ${y}l4-3l5 3l-5 3z`} fill="none" stroke="#777" strokeWidth=".6" />
);

const draftFiles: File[] = [
  {
    n: "図面02.elt", w: 50, b: "draft", a: 5, z: 76, bg: "#dadada",
    art: (
      <g fill="none" stroke="#555" strokeWidth=".6">
        <path d="M11 37H24M12 41H27M12 48H24M13 34V50M20 34V51M50 34V47M48 46H51M28 29L38 30M30 34L36 26" />
        <path d="M17 24H27M29 45V38M17 28V33" strokeDasharray="1 1" />
        <path d="M31 29l5-3l2 3l-4 4z" strokeWidth="1.200" strokeDasharray="1 1" />
        {iso(60, 40)}
        <path d="M39 59H77M39 59V69H77M70 63H77" stroke="#333" />
        <path d={dots(22, 41, 61, 14, 6, 2) + dots(20, 66, 61, 11, 6, 3)} strokeWidth="1" />
      </g>
    ),
  },
  {
    n: "図面02.elt", w: 50, b: "draft", a: 2, z: 79, bg: "#dadada",
    art: (
      <g fill="none" stroke="#555" strokeWidth=".6">
        <path d="M2 2.500H77" stroke="#888" />
        <path d="M2 26H24M3 35H21M2 41H27M6 15V50M14 26V47M21 25V49M28 34V45M28 18L40 16M31 22L36 12M54 26V45M48 26H54" />
        <path d="M6 28h4v4h-4zM15 29h5v5h-5zM9 40h6v5h-6z" strokeWidth=".8" />
        <path d="M35 28l4 3l-2 5zM34 13l4 3l-2 5M5 17h12M7 20h6" strokeWidth="1.300" strokeDasharray="1 1" />
        {iso(60, 46)}
        <path d={dots(70, 41, 67, 35, 10, 1)} strokeWidth="1" />
      </g>
    ),
  },
  { n: "Templatev13...", w: 71, b: "draft", a: 11, z: 71, art: plan("#555") },
  {
    n: "Cavity-EL-00...", w: 71, b: "draft", a: 16, z: 66,
    art: (
      <g stroke="#777" fill="none" strokeWidth=".8">
        <path d="M13 20.500H69M13 61.500H68" />
        <path d="M52 23H66" stroke="#444" strokeDasharray="4 1" />
        <path d="M21 26v9M24 25v9M33 31h15M33 28v4M48 28v4M56 27v8M62 26v8M21 43h5v11h-5zM33 42h14v11h-14zM36 45h8v5h-8zM55 42v12M60 41v14M54 45h12M54 49h12M42 57h5M50 58h16" strokeDasharray="3 1" />
        <path d="M35 44h9v6h-9z" stroke="#91609e" />
      </g>
    ),
  },
  {
    n: "TemplateE12...", w: 71.500, b: "draft", a: 11, z: 71,
    art: (
      <g stroke="#333" fill="none">
        <path d="M13.500 20.500H69.500V61.500H13.500Z" stroke="#999" strokeWidth="1.600" />
        <path d="M23 31q2-3 3 0v4h-4zM37 31l4 1l7 1v2h-8zM23 45q2-3 3 0v8h-2zM54 41l4 1l5 6l-4-1z" fill="#17122b" stroke="#17122b" strokeWidth=".8" strokeDasharray="2 .5" />
        <path d="M50 24H68M45 53V60M46 55H66M46 58h22" strokeDasharray="3 1" stroke="#666" strokeWidth="1.300" />
      </g>
    ),
  },
];

const ncFiles: File[] = [
  {
    n: "80A019C829...", w: 70.500, b: "nc", a: 19, z: 62,
    art: (
      <g>
        <path d="M42 19H77V62H34Q35 45 36 27Z" fill="#92a3bd" />
        <path d="M50 43L66 37L77 45V62H49Z" fill="#a9704e" />
        <path d={dots(260, 36, 20, 40, 41, 7)} stroke="#6f83a3" strokeWidth=".8" />
        <path d={dots(90, 50, 42, 25, 19, 11)} stroke="#a9704e" strokeWidth="1.300" />
        <path d="M56 36L68 27L73 31L62 40Z" fill="#7770ef" />
        <path d={dots(75, 31, 20, 10, 41, 5)} stroke="#fff" strokeWidth="1.500" />
        <path d={dots(60, 31, 20, 11, 41, 3)} stroke="#8a6f74" strokeWidth=".8" />
      </g>
    ),
  },
  {
    n: "NC0.elt", w: 36.500, b: "nc", a: 20, z: 62,
    art: (
      <g>
        <path d="M1 38L14 24L38 20L77 32V62H1Z" fill="#b77550" />
        <path d="M37 35L40 33L72 43L62 62H20L34 51Z" fill="#ab6a4a" />
        <path d="M40 35L69 44L60 61H27L40 48Z" fill="#b77969" />
        <path d={dots(75, 30, 46, 34, 15, 6)} stroke="#7d5a9b" strokeWidth="1" />
        <path d="M40 34V48L62 56L69 42M24 60L41 48" stroke="#704077" strokeDasharray="2 1" strokeWidth=".8" fill="none" />
        <ellipse cx="18" cy="35" rx="4" ry="2.500" fill="none" stroke="#9f6241" strokeWidth=".7" />
      </g>
    ),
  },
  {
    n: "nc_practice_...", w: 70, b: "nc", a: 20, z: 62,
    art: <g><path d="M35 42L39 36L50 39L47 45L41 47Z" fill="#b66d43" /><path d="M38 40l7 3l4-3" stroke="#8b462a" fill="none" /><path d="M31 40l9-9l11 6M27 36l30 14M33 44l9-5l14 4" stroke="#b7aac5" strokeDasharray="2 2" strokeWidth=".6" fill="none" /></g>,
  },
  {
    n: "nr#1S610-X...", w: 70, b: "nc", a: 17, z: 64, bg: "#e6e6e6",
    art: (
      <g>
        <path d="M15.500 22V62.500H67V21.500H15.500Z" fill="#7d7a50" stroke="#e28d52" strokeWidth="2" />
        <path d="M40 50h26v11h-26z" fill="#8794cf" />
        <path d="M26 34l10-1v10l-10 1zM25 46l12 1v7l-12-1zM42 34l5-3l8 1l3 8l-2 9l-12 2l-3-8z" fill="#27c471" />
        <path d="M28 36h6v4h-6zM28 48h7v4h-7zM46 37h5v5h-5z" fill="#11342b" />
        <path d="M23 26v7M32 24v6M40 24v7M59 34h4M21 47h4M28 57h9M45 53v8M22 55h4M54 57h8M38 42h4" stroke="#7b168d" strokeWidth="2" />
        <path d={dots(60, 21, 26, 42, 32, 8)} stroke="#163c58" strokeWidth="1.400" />
        <path d="M64 25v4M20 61h4M63 34v3M62 44v6" stroke="#165e98" strokeWidth="3" />
        <path d="M55 25h2M31 25h2M47 26h2M20 26h2" stroke="#e95664" strokeWidth="2.500" />
      </g>
    ),
  },
  {
    n: "nc_practice2...", w: 71.500, b: "nc",
    art: <g><path d="M23 1H59V81H23Z" fill="#fff" /><path d="M35 48L41 40L47 48Z" fill="#9c5a3c" /><path d="M41 45L45 35L47 33V49Z" fill="#ec1bc5" /><path d="M41 49l5-10l-1 12" fill="none" stroke="#dc101c" strokeWidth="2" /><path d="M26 38l30 14M30 48l10-7l16-2M32 52l14-8l9 5" stroke="#8d90d8" strokeWidth=".6" strokeDasharray="2 1" fill="none" /><path d="M45 43l2 4" stroke="#173dd7" strokeWidth="2" /></g>,
  },
  {
    n: "NC1.elt", w: 36.500, b: "nc", a: 4, z: 79,
    art: (
      <g>
        <path d="M18 42L43 19L76 38V50L51 72L19 53Z" fill="#a3a4a8" />
        <path d="M51 57L76 39V50L51 72Z" fill="#b4b5b8" />
        <path d="M18 42L43 19L76 39L51 57Z" fill="#b8b9bd" stroke="#85868a" strokeWidth=".7" />
        <path d="M25 42L43 27L68 39L50 52Z" fill="#9c9da2" stroke="#75767b" strokeWidth=".7" />
        <path d="M27 43L61 35M34 34L57 47M36 49L64 42M51 57V71" stroke="#75777d" strokeWidth=".7" strokeDasharray="2 1" />
        <path d="M43 16V49M20 55L16 60" stroke="#e96369" strokeDasharray="3 1" />
        <path d="M46 17h5M52 20h7M57 25h5M46 31l11 5" stroke="#6c78df" strokeWidth="1.500" strokeDasharray="2 1" />
      </g>
    ),
  },
  {
    n: "5jiku_sampl...", w: 69, b: "nc", a: 8, z: 74,
    art: <g fill="none"><path d="M27 34Q31 51 47 56Q60 58 68 53" stroke="#dc2430" strokeWidth=".9" strokeDasharray="3 .7" /><path d="M27 34L41 38M57 48L68 53" stroke="#dc2430" strokeWidth="1.300" /><path d="M40 36Q41 47 52 48L57 49" stroke="#202acb" strokeWidth="1.700" /><path d="M40 35Q50 22 57 36L50 41Q41 39 40 35M40 41l-2 4M49 27h5M47 40l13 8" stroke="#a8abb0" strokeDasharray="1.500 1.500" strokeWidth=".8" /></g>,
  },
  {
    n: "rocal3x_1.elt", w: 62.500, b: "nc", a: 22, z: 61,
    art: <g><path d="M10 22H48Q43 38 52 61H15Q17 38 10 22Z" fill="#808082" /><path d={dots(140, 14, 33, 35, 27, 4)} stroke="#5b5b5b" strokeWidth=".7" /><path d={dots(60, 4, 22, 8, 37, 2) + dots(60, 46, 22, 7, 37, 8)} stroke="#999" strokeWidth=".8" /><path d="M15 24Q29 29 43 23M17 39Q30 44 46 38" stroke="#6d6a6b" fill="none" strokeWidth=".7" /><path d="M28 56l5 3" stroke="#a55" /></g>,
  },
  {
    n: "ねじ切り.elt", w: 53, b: "nc", a: 22, z: 61,
    art: <g fill="none"><circle cx="47" cy="42" r="8.500" stroke="#a5aae2" strokeWidth="1.500" strokeDasharray="2 1" /><circle cx="47" cy="42" r="6.200" stroke="#6872b2" strokeWidth="1.300" /><circle cx="47" cy="42" r="4.500" fill="#c9cbce" stroke="#9b9ba5" strokeWidth=".6" /><path d="M28 24l-3 13M25 36l18 8" stroke="#cacbdf" strokeDasharray="1 2" /></g>,
  },
  {
    n: "NC2-02sam...", w: 65.500, b: "nc", a: 18, z: 65,
    art: <g><path d="M29 44L39 39L49 46L40 52Z" fill="#c56cc6" /><path d="M29 43L39 38L49 45L40 50Z" fill="#9ac4ee" /><path d="M34 44Q35 27 39 28Q43 30 42 40L44 44L39 47Z" fill="#7fa5d6" /><path d={dots(30, 35, 30, 7, 15, 5)} stroke="#52759c" strokeWidth=".7" /></g>,
  },
  { n: "NC2.elt", w: 36.500, b: "nc", a: 5, z: 77, art: <path d="M43 44l2 3M43 47h4" stroke="#e3a6a6" /> },
  {
    n: "Pocket-Man...", w: 69.500, b: "nc", a: 24, z: 59,
    art: <g><path d="M14 41L24 33L33 29L49 32L73 36V46L54 55L15 50Z" fill="#b86c42" /><path d="M14 41L30 33L46 32L60 36L73 36L54 47Z" fill="#c27a50" /><path d="M54 47L73 36V45L54 55Z" fill="#46bd50" /><path d={dots(65, 17, 35, 42, 14, 3)} stroke="#95593a" strokeWidth=".7" /></g>,
  },
  {
    n: "k17-121_Cor...", w: 71.500, b: "nc", a: 22, z: 60,
    art: (
      <svg x="1" y="22" width="76" height="38" viewBox="1 22 76 38">
        <g fill="none">
          {[3, 6, 10, 14, 18, 23, 28, 34, 40].map((r) => <ellipse key={r} cx="47" cy="39" rx={r} ry={r * .82} stroke="#d3c8d3" strokeDasharray="1 1.500" strokeWidth=".8" />)}
          <path d="M35 22L58 60" stroke="#bbb" strokeWidth=".6" />
        </g>
      </svg>
    ),
  },
  {
    n: "NC02.elt", w: 43, b: "nc", a: 5, z: 77,
    art: <g><path d="M14 43L32 23L67 31L49 53Z" fill="#b87750" /><path d="M32 40Q31 22 44 19.500Q56 20 57 34L42 41Z" fill="#b06b44" /><path d="M32 38Q34 20 45 20Q40 25 38 41ZM42 40Q43 24 51 23L57 34" fill="#c98760" stroke="#9b623f" strokeWidth=".6" /><path d="M40 35l4 4" stroke="#7348ad" /></g>,
  },
];

function Card({ f }: { f: File }) {
  const a = f.a ?? 1;
  const z = f.z ?? 1;
  return (
    <div className="relative h-[82px] w-[78px] shrink-0 overflow-hidden border border-[#d0d0d0] bg-[#efefef]">
      <svg width="76" height="80" viewBox="1 1 76 80" className="block">
        <rect x="1" y={a} width="76" height={z - a} fill={f.bg ?? "#fff"} />
        <g>{f.art}</g>
        <g fill="#aaa" fillOpacity=".65">
          <path d="M5 10.500h4v1.500H5zM9 7h1.500v2.500h3.500V7h1.500v9H14v-2.500h-3.500V16H9z" />
          <path d="M25 6h4l1 1.500h5v2H29l-3 4V16h-1zM29.500 10.500H37L33.500 16H26.500z" />
        </g>
        <path d="M62.500 6.500L71.500 15.500M71.500 6.500L62.500 15.500" stroke="#aaa" strokeOpacity=".75" strokeWidth="2" />
      </svg>
      <div className="absolute left-0 top-[47px]"><Badge k={f.b} /></div>
      <div className="absolute left-[2px] top-[64px] text-[11.5px] leading-4 text-black">
        <Fit t={f.n} w={f.w} />
      </div>
    </div>
  );
}

function Bar({ t, w, h, closed = false }: { t: string; w: number; h: string; closed?: boolean }) {
  return (
    <h2 className={`flex w-[620px] shrink-0 items-center bg-gradient-to-b from-[#8ba3b7] to-[#7294b0] pl-2 text-[12px] font-bold leading-[18px] text-white ${h}`}>
      <Up flip={closed} />
      <span className="ml-[12px] flex-1"><Fit t={t} w={w} /></span>
      {!closed && (
        <svg width="17" height="15" viewBox="0 0 17 15" className="mr-[2px]">
          <path d="M1.500 1.500H13V5M1.500 1.500V12.500H8" fill="none" stroke="#fff" strokeWidth="1.200" />
          <path d="M3.500 4h2v2h-2zM7 4h2v2H7zM10 4h2v1h-2zM3.500 8h2v2h-2zM7 8h1.500v2H7z" fill="none" stroke="#dfe8ef" strokeWidth=".8" />
          <path d="M10 7.500L15.500 13M15.500 7.500L10 13" stroke="#fff" strokeWidth="2" />
        </svg>
      )}
    </h2>
  );
}

function Grid({ files, h, pad }: { files: File[]; h: string; pad: string }) {
  return (
    <div className={`w-[619px] shrink-0 border-x border-[#84a0b6] bg-[#eff5fb] px-1 ${h}`}>
      <div className={`grid h-full auto-rows-[82px] grid-cols-[repeat(7,78px)] gap-[7px] bg-[#fafafa] pl-[6px] ${pad}`}>
        {files.map((f, i) => <Card key={i} f={f} />)}
      </div>
    </div>
  );
}

function Recent() {
  return (
    <div className="absolute left-[716px] top-[22px] flex h-[790px] w-[722px] border-t-[5px] border-[#829fb5] bg-[#e3e9f0]">
      <aside className="flex w-24 shrink-0 items-start border-l border-[#829fb5] pl-[6px] pt-[5px]">
        <svg width="34" height="20" viewBox="0 0 34 20">
          <path d="M6 6L2.500 10L6 14" fill="none" stroke="#444" strokeWidth="1.800" />
          <path d="M24 1L32 7L29 9L27 9L24 13L25 17L20 14L14 19L18 12L14 9Q18 7 20 8L24 5Z" fill="#7e97a9" />
        </svg>
      </aside>
      <div className="w-[2px] shrink-0 bg-[#829fb5]" />
      <main className="flex flex-1 flex-col pl-[2px]">
        <div className="flex h-[33px] shrink-0 items-center pl-[7px] pt-[3px]">
          <svg width="34" height="22" viewBox="0 0 34 22">
            <path d="M5.500 7L2 11L5.500 15" fill="none" stroke="#444" strokeWidth="1.800" />
            <circle cx="22.500" cy="11" r="8.700" fill="#f6f8f9" stroke="#8296a5" strokeWidth="1.500" />
            <path d="M22 5V12H27" fill="none" stroke="#a5a9ac" strokeWidth="1.700" />
          </svg>
        </div>
        <Bar t="ｱｾﾝﾌﾞﾘ" w={37} h="h-[21px]" />
        <Grid files={asmFiles} h="h-[178px]" pad="pt-[6px]" />
        <Bar t="ﾊﾟｰﾂ" w={25} h="h-[22px]" />
        <Grid files={partFiles} h="h-[178px]" pad="pt-[6px]" />
        <Bar t="図面" w={24} h="h-[21px]" />
        <Grid files={draftFiles} h="h-[96px]" pad="pt-[7px]" />
        <Bar t="NC" w={17} h="h-[22px]" />
        <div className="flex h-[190px] w-[619px] shrink-0 border-x border-[#84a0b6] bg-[#fafafa]">
          <div className="grid h-[190px] w-[601px] auto-rows-[82px] grid-cols-[repeat(7,78px)] gap-[7px] overflow-hidden pl-[6px] pt-[6px]">
            {ncFiles.map((f, i) => <Card key={i} f={f} />)}
            <div className="border border-[#d0d0d0] bg-[#efefef]" />
            <div className="border border-[#d0d0d0] bg-[#efefef] px-[10px]"><div className="h-full bg-[#e2e2e2]" /></div>
          </div>
          <div className="flex w-4 flex-col items-center bg-[#f0f0f0] pt-[7px]">
            <svg width="8" height="4" viewBox="0 0 8 4"><path d="M0 4H8L4 0Z" fill="#85889a" /></svg>
            <div className="mt-[7px] h-[110px] w-[9px] rounded-[2px] bg-[#868a9c]" />
            <svg width="8" height="4" viewBox="0 0 8 4" className="mt-[50px]"><path d="M0 0H8L4 4Z" fill="#85889a" /></svg>
          </div>
        </div>
        <Bar t="ﾌｫﾙﾀﾞ" w={27} h="h-[21px]" closed />
      </main>
    </div>
  );
}

export default function App() {
  return (
    <div className={`relative h-[820px] w-[1444px] overflow-hidden bg-[#98989d] text-[#222] ${FONT}`}>
      <svg width="0" height="0" className="absolute">
        <defs>
          <linearGradient id="lime" x1="0" y1="0" x2="1" y2="1"><stop offset="0" stopColor="#19b51b" /><stop offset="1" stopColor="#d8f81a" /></linearGradient>
          <linearGradient id="orange" x1="0" y1="0" x2="1" y2="1"><stop offset="0" stopColor="#f6912a" /><stop offset="1" stopColor="#ffd193" /></linearGradient>
          <linearGradient id="folder" x1="0" y1="0" x2="1" y2="1"><stop offset="0" stopColor="#fff3c6" /><stop offset="1" stopColor="#f5a03c" /></linearGradient>
          <linearGradient id="door" x1="0" y1="0" x2="0" y2="1"><stop offset="0" stopColor="#83c8f0" /><stop offset="1" stopColor="#1272b4" /></linearGradient>
          <linearGradient id="steel" x1="0" y1="0" x2="0" y2="1"><stop offset="0" stopColor="#d5d5d5" /><stop offset="1" stopColor="#747474" /></linearGradient>
          <linearGradient id="bore" x1="0" y1="0" x2="1" y2="0"><stop offset="0" stopColor="#bd7247" /><stop offset=".6" stopColor="#f0a878" /><stop offset="1" stopColor="#b86c42" /></linearGradient>
          <linearGradient id="shaft" x1="0" y1="0" x2="1" y2="0"><stop offset="0" stopColor="#6f6f6f" /><stop offset=".5" stopColor="#d6d6d6" /><stop offset="1" stopColor="#6a6a6a" /></linearGradient>
        </defs>
      </svg>
      <AppFrame />
      <svg width="36" height="52" viewBox="0 0 36 52" className="absolute left-[681px] top-[642px]">
        <path d="M20 2H36V36H20Z" fill="#f5b281" stroke="#b98763" />
        <path d="M1 17H24V50H13Q2 45 1 34Z" fill="#dce79a" stroke="#8f9668" />
        <path d="M3 38L13 50L11 41Z" fill="#b3cb2a" />
        <path d="M11 29L18 23H30L35 28L31 32L12 30Z" fill="#77783c" fillOpacity=".9" />
        <path d="M32 5L36 2V12H33Z" fill="#ee7a24" />
      </svg>
      <Recent />
      <FileMenu />
      <div className="pointer-events-none absolute left-[705px] top-[17px] h-[799px] w-[737px] border-[5px] border-[#ed1c24]" />
    </div>
  );
}
